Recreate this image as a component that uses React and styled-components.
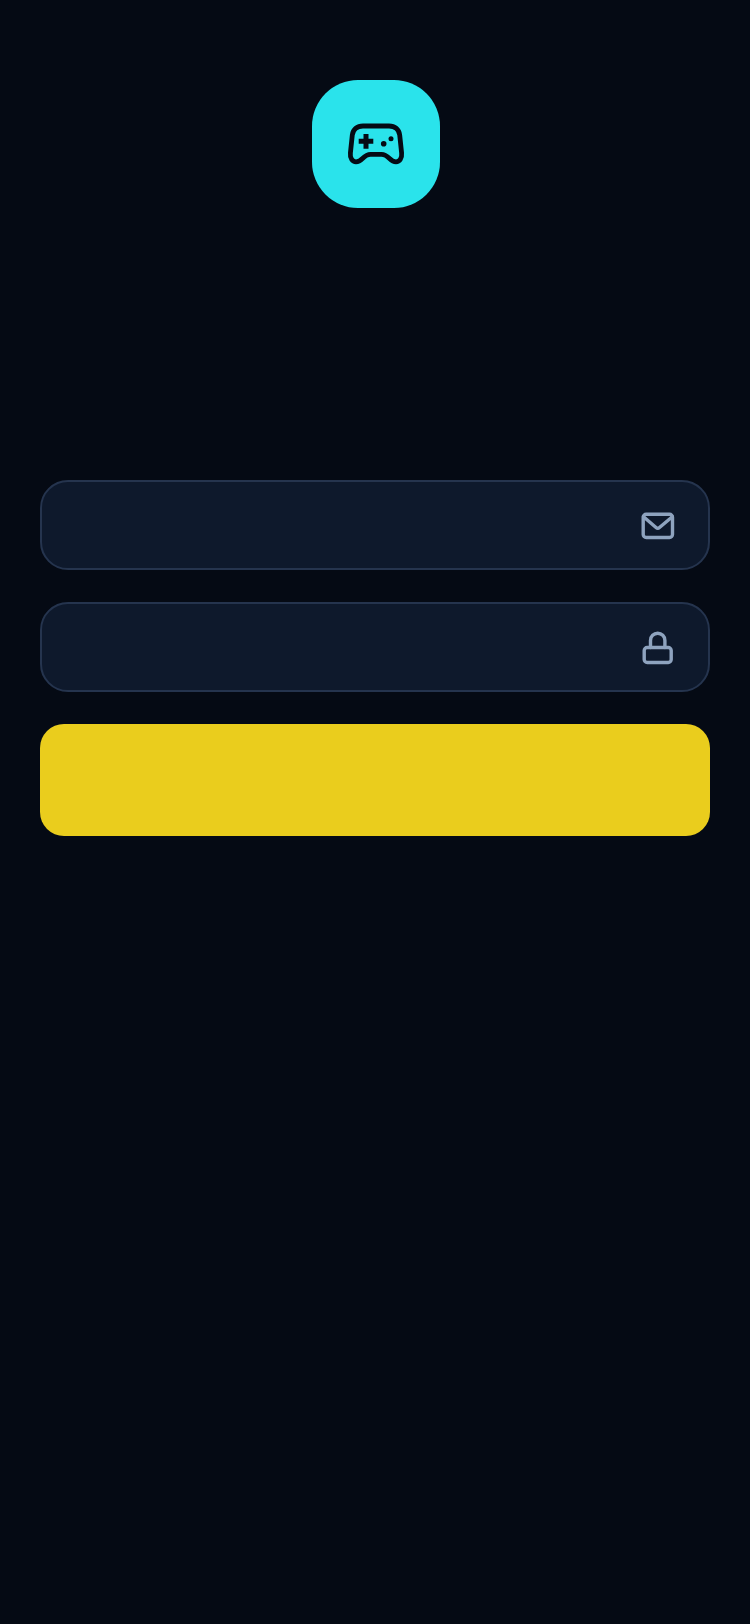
import React from 'react'
import styled, { createGlobalStyle } from 'styled-components'

const GlobalStyle = createGlobalStyle`
  html, body {
    margin: 0;
    background: #050a14;
    font-family: "Inter", "Liberation Sans", sans-serif;
  }
`

const Page = styled.div`
  box-sizing: border-box;
  min-height: 100vh;
  padding: 80px 40px;
  display: flex;
  flex-direction: column;
  background: #050a14;
`
const Logo = styled.div`
  align-self: center;
  width: 128px;
  height: 128px;
  margin: 0 0 272px 2px;
  border-radius: 46px;
  background: #2ae3eb;
  display: flex;
  align-items: center;
  justify-content: center;
`
const Form = styled.form`
  display: flex;
  flex-direction: column;
  gap: 32px;
`
const Field = styled.label`
  box-sizing: border-box;
  height: 90px;
  padding: 0 28px 0 32px;
  display: flex;
  align-items: center;
  gap: 16px;
  background: #0e192c;
  border: 2px solid #25344e;
  border-radius: 28px;
`
const Input = styled.input`
  flex: 1;
  min-width: 0;
  border: 0;
  outline: 0;
  background: transparent;
  color: #f1f5f9;
  font-size: 28px;
  font-family: inherit;
`
const Submit = styled.button`
  height: 112px;
  border: 0;
  border-radius: 24px;
  background: #eacd1d;
`

const GamepadIcon = () => (
  <svg width="64" height="64" viewBox="0 0 64 64" fill="none" stroke="#050a14" strokeWidth="4.800" strokeLinecap="round" strokeLinejoin="round">
    <path d="M19 14H45C51 14 55 17.500 55.700 23L57.600 41C58.200 46.500 55.500 49.800 52 49.800C49.500 49.800 47.500 48.500 45.500 46.500C42.500 43.500 41 42.300 37.500 42.300H26.500C23 42.300 21.500 43.500 18.500 46.500C16.500 48.500 14.500 49.800 12 49.800C8.500 49.800 5.800 46.500 6.400 41L8.300 23C9 17.500 13 14 19 14Z" />
    <path d="M22 22V36.700M14.700 29.300H29.300" strokeWidth="5" strokeLinecap="butt" />
    <circle cx="47" cy="26.700" r="2.500" fill="#050a14" stroke="none" />
    <circle cx="39.700" cy="31.800" r="2.800" fill="#050a14" stroke="none" />
  </svg>
)

const MailIcon = () => (
  <svg width="40" height="40" viewBox="0 0 40 40" fill="none" stroke="#8ea3bf" strokeWidth="3.400" strokeLinecap="round" strokeLinejoin="round">
    <rect x="3.200" y="9.200" width="29.300" height="23.300" rx="3" />
    <path d="M3.500 11.700L16 22.500C17 23.400 18.500 23.400 19.500 22.500L32.300 11.700" />
  </svg>
)

const LockIcon = () => (
  <svg width="40" height="40" viewBox="0 0 40 40" fill="none" stroke="#8ea3bf" strokeWidth="3.400" strokeLinecap="round" strokeLinejoin="round">
    <rect x="4.200" y="20.500" width="27" height="15" rx="3" />
    <path d="M10.500 20.500V13.400A7.200 7.200 0 0 1 24.900 13.400V20.500" />
  </svg>
)

export default function App() {
  return (
    <Page>
      <GlobalStyle />
      <Logo>
        <GamepadIcon />
      </Logo>
      <Form onSubmit={(e) => e.preventDefault()}>
        <Field>
          <Input type="email" />
          <MailIcon />
        </Field>
        <Field>
          <Input type="password" />
          <LockIcon />
        </Field>
        <Submit type="submit" />
      </Form>
    </Page>
  )
}
